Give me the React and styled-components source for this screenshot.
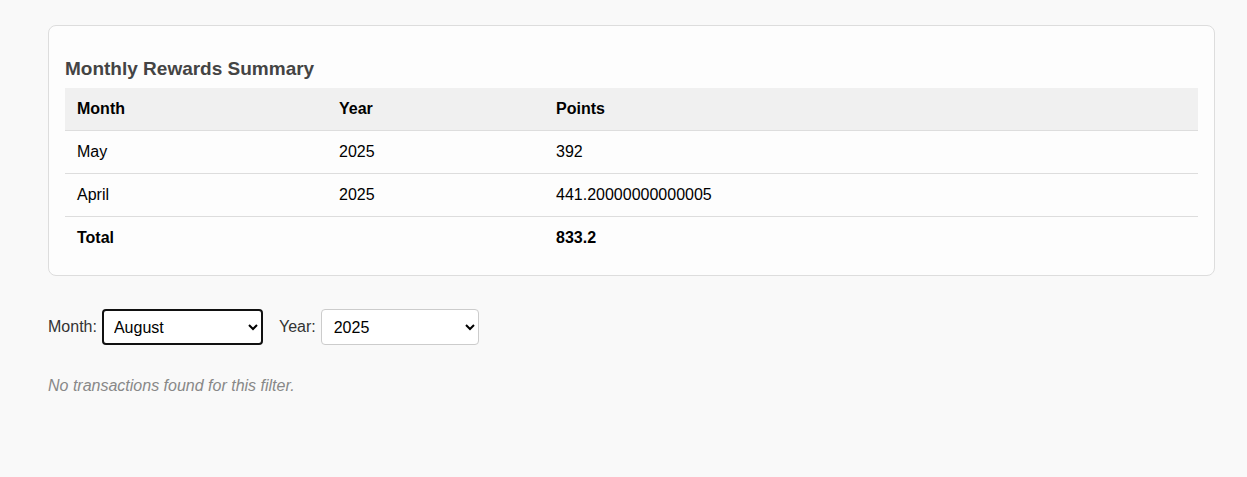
import styled, { createGlobalStyle } from 'styled-components'

const GlobalStyle = createGlobalStyle`
    body {
        margin: 0;
        background-color: #f9f9f9;
        font-family: "Liberation Sans", Arial, sans-serif;
        color: #333;
    }
`

const summary = [
    { month: 'May', year: 2025, points: 392 },
    { month: 'April', year: 2025, points: 441.20000000000005 },
]

const months = ['January', 'February', 'March', 'April', 'May', 'June', 'July', 'August', 'September', 'October', 'November', 'December']

function App() {
    const total = summary.reduce((sum, row) => sum + row.points, 0)

    return (
        <>
            <GlobalStyle />
            <Page>
                <Card>
                    <Title>Monthly Rewards Summary</Title>
                    <Table>
                        <colgroup>
                            <col style={{ width: '262px' }} />
                            <col style={{ width: '217px' }} />
                            <col />
                        </colgroup>
                        <thead>
                            <tr>
                                <HeadCell>Month</HeadCell>
                                <HeadCell>Year</HeadCell>
                                <HeadCell>Points</HeadCell>
                            </tr>
                        </thead>
                        <tbody>
                            {summary.map(row => (
                                <tr key={row.month}>
                                    <Cell>{row.month}</Cell>
                                    <Cell>{row.year}</Cell>
                                    <Cell>{row.points}</Cell>
                                </tr>
                            ))}
                            <tr>
                                <TotalCell>Total</TotalCell>
                                <TotalCell />
                                <TotalCell>{Math.round(total * 10) / 10}</TotalCell>
                            </tr>
                        </tbody>
                    </Table>
                </Card>

                <Filters>
                    <Label>Month:</Label>
                    <Select $focused defaultValue="August">
                        {months.map(m => <option key={m}>{m}</option>)}
                    </Select>
                    <Label $gap>Year:</Label>
                    <Select defaultValue="2025">
                        <option>2024</option>
                        <option>2025</option>
                    </Select>
                </Filters>

                <EmptyText>No transactions found for this filter.</EmptyText>
            </Page>
        </>
    )
}

export default App

const Page = styled.div`
    padding: 25px 32px 40px 48px;
`

const Card = styled.div`
    background-color: #fdfdfd;
    border: 1px solid #ddd;
    border-radius: 8px;
    padding: 16px;
`

const Title = styled.h3`
    font-size: 19px;
    font-weight: bold;
    color: #444;
    margin: 16px 0 8px;
`

const Table = styled.table`
    width: 100%;
    border-collapse: collapse;
    table-layout: fixed;
`

const HeadCell = styled.th`
    background-color: #f0f0f0;
    text-align: left;
    font-size: 16px;
    font-weight: bold;
    color: #000;
    padding: 12px;
    border-bottom: 1px solid #ddd;
`

const Cell = styled.td`
    font-size: 16px;
    color: #000;
    padding: 12px;
    border-bottom: 1px solid #ddd;
`

const TotalCell = styled.td`
    font-size: 16px;
    font-weight: bold;
    color: #000;
    padding: 12px;
`

const Filters = styled.div`
    display: flex;
    align-items: center;
    margin-top: 33px;
`

const Label = styled.label`
    font-size: 16px;
    color: #333;
    margin: ${props => props.$gap ? '0 5px 0 16px' : '0 5px 0 0'};
`

const Select = styled.select`
    box-sizing: border-box;
    width: ${props => props.$focused ? '161px' : '158px'};
    height: 36px;
    font-family: "Liberation Sans", Arial, sans-serif;
    font-size: 16px;
    color: #000;
    background-color: #fff;
    border: ${props => props.$focused ? '2px solid #111' : '1px solid #ccc'};
    border-radius: 4px;
    padding: ${props => props.$focused ? '0 6px' : '0 6px 0 8px'};
`

const EmptyText = styled.p`
    font-size: 16px;
    font-style: italic;
    color: #888;
    margin: 32px 0 0;
`
